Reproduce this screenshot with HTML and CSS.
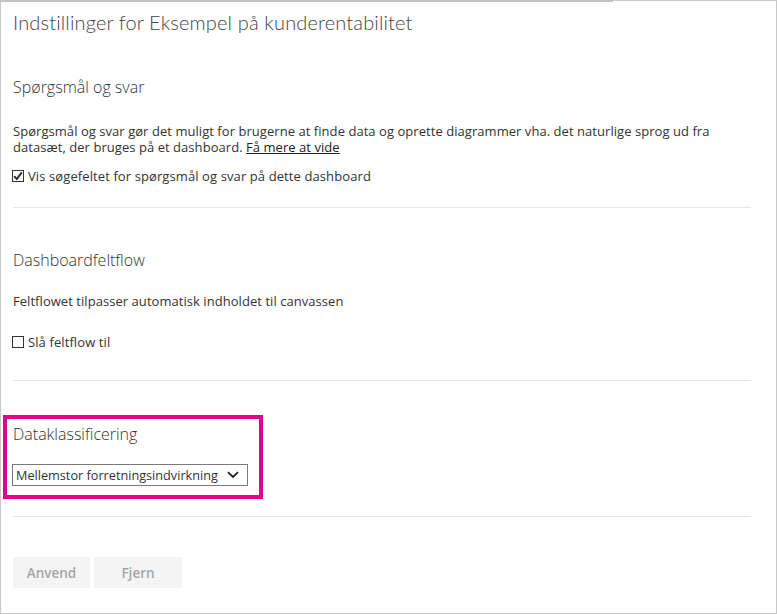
FILE: index.html
```html
<!DOCTYPE html>
<html lang="da">
<head>
<meta charset="utf-8">
<title>Indstillinger</title>
<link rel="stylesheet" href="styles.css">
</head>
<body>
<div class="frame">
  <h1 class="title">Indstillinger for Eksempel på kunderentabilitet</h1>

  <section class="section qa">
    <h2 class="heading">Spørgsmål og svar</h2>
    <p class="text para-qa">Spørgsmål og svar gør det muligt for brugerne at finde data og oprette diagrammer vha. det naturlige sprog ud fra datasæt, der bruges på et dashboard. <a class="link" href="#">Få mere at vide</a></p>
    <label class="check check-qa">
      <span class="box">
        <svg width="12" height="12" viewBox="0 0 12 12"><path d="M2.2 6.2 L4.8 9 L9.8 2.4" fill="none" stroke="#222" stroke-width="1.8"/></svg>
      </span>
      <span class="label">Vis søgefeltet for spørgsmål og svar på dette dashboard</span>
    </label>
  </section>
  <hr class="divider div1">

  <section class="section flow">
    <h2 class="heading heading-flow">Dashboardfeltflow</h2>
    <p class="text para-flow">Feltflowet tilpasser automatisk indholdet til canvassen</p>
    <label class="check check-flow">
      <span class="box"></span>
      <span class="label">Slå feltflow til</span>
    </label>
  </section>
  <hr class="divider div2">

  <section class="highlight">
    <h2 class="heading heading-class">Dataklassificering</h2>
    <div class="select">
      <span class="select-text">Mellemstor forretningsindvirkning</span>
      <svg class="chev" width="12" height="8" viewBox="0 0 12 8"><path d="M1 1.2 L6 6 L11 1.2" fill="none" stroke="#222" stroke-width="1.8"/></svg>
    </div>
  </section>
  <hr class="divider div3">

  <div class="buttons">
    <button class="btn btn-apply">Anvend</button>
    <button class="btn btn-remove">Fjern</button>
  </div>
</div>
</body>
</html>
```
FILE: styles.css
```css
html, body {
  margin: 0;
  padding: 0;
  background: #ffffff;
}

body {
  font-family: "Segoe UI", "Open Sans", "Noto Sans", sans-serif;
  color: #333333;
}

.frame {
  position: relative;
  box-sizing: border-box;
  width: 777px;
  height: 614px;
  border: 1px solid #c8c8c8;
  padding: 7px 26px 0 11px;
}

.frame::before {
  content: "";
  position: absolute;
  top: -1px;
  left: -1px;
  width: 613px;
  height: 2px;
  background: #c2c2c2;
}

.title {
  margin: 0;
  font-family: "Segoe UI", Lato, sans-serif;
  font-size: 20px;
  line-height: 28px;
  font-weight: 300;
  letter-spacing: 0.15px;
  color: #444444;
  padding-left: 1px;
}

.heading {
  margin: 0;
  font-size: 16px;
  line-height: 20px;
  font-weight: 300;
  color: #333333;
  padding-left: 1px;
}

.qa .heading { margin-top: 41px; }

.text {
  margin: 0;
  font-size: 13px;
  line-height: 16px;
  letter-spacing: 0.05px;
  padding-left: 1px;
}

.para-qa { margin-top: 26px; }
.para-flow { margin-top: 23px; }

.link {
  color: #222222;
  text-decoration: underline;
}

.check {
  display: flex;
  align-items: center;
  gap: 4px;
  font-size: 13px;
  line-height: 16px;
  letter-spacing: 0.1px;
}

.check-qa { margin-top: 13px; }
.check-flow { margin-top: 25px; }

.box {
  box-sizing: border-box;
  width: 12px;
  height: 12px;
  border: 1px solid #333333;
  background: #ffffff;
  display: flex;
  align-items: center;
  justify-content: center;
}

.box svg {
  display: block;
  flex: none;
}

.divider {
  border: 0;
  height: 1px;
  background: #e6e6e6;
  margin: 0;
  width: 738px;
  margin-left: 1px;
}

.div1 { margin-top: 23px; }
.heading-flow { margin-top: 42px; }
.div2 { margin-top: 30px; }

.highlight {
  box-sizing: border-box;
  width: 260px;
  height: 84px;
  margin-top: 34px;
  margin-left: -9px;
  border: 4px solid #e3008c;
  padding: 5px 0 0 5px;
}

.select {
  box-sizing: border-box;
  width: 236px;
  height: 22px;
  margin-top: 20px;
  border: 1px solid #7a7a7a;
  display: flex;
  align-items: center;
  justify-content: space-between;
  padding: 0 8px 0 3px;
  font-size: 12.7px;
}

.chev { display: block; }

.div3 { margin-top: 17px; }

.buttons {
  display: flex;
  gap: 4px;
  margin-top: 40px;
  padding-left: 1px;
}

.btn {
  height: 31px;
  border: 0;
  background: #f4f4f4;
  color: #a6a6a6;
  font-family: "Segoe UI", "Open Sans", sans-serif;
  font-size: 13.5px;
  font-weight: 600;
  padding: 0;
}

.btn-apply { width: 77px; }
.btn-remove { width: 88px; }
```
